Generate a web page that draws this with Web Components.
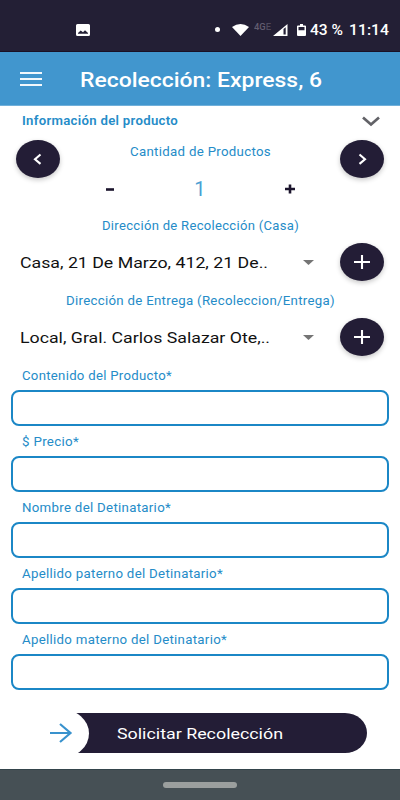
<!DOCTYPE html>
<html lang="es">
<head>
<meta charset="utf-8">
<meta name="viewport" content="width=device-width, initial-scale=1">
<title>Recolección</title>
<style>
  body {
    margin: 0;
    background: #fff;
    font-family: Roboto, "Liberation Sans", sans-serif;
  }
</style>
</head>
<body>
<pickup-screen></pickup-screen>

<script>
// Single line of text, stretched horizontally to the given width
class FitText extends HTMLElement {
  connectedCallback() {
    this.attachShadow({ mode: "open" })
    this.shadowRoot.innerHTML = `
      <style>
        :host { display: block; flex: none; white-space: nowrap; }
        span { display: inline-block; transform-origin: 0 50%; }
      </style>
      <span><slot></slot></span>
    `
    const width = Number(this.getAttribute("width"))
    const span = this.shadowRoot.querySelector("span")
    this.style.width = `${width}px`
    span.style.transform = `scaleX(${width / span.getBoundingClientRect().width})`
  }
}
customElements.define("fit-text", FitText)

class StatusBar extends HTMLElement {
  connectedCallback() {
    this.attachShadow({ mode: "open" })
    this.shadowRoot.innerHTML = `
      <style>
        :host {
          display: flex;
          box-sizing: border-box;
          height: 52px;
          padding: 8px 11px 0 76px;
          align-items: center;
          background: #231f35;
          border-bottom: 1px solid #191126;
          color: #fff;
          font-size: 14px;
          font-weight: 500;
          line-height: 20px;
        }
        svg { display: block; flex: none; fill: #fff; }
        .dot { width: 5px; height: 5px; border-radius: 50%; background: #fff; margin: 0 12px 0 auto; }
        .net { font-size: 9px; line-height: 10px; color: #625d70; margin: -5px 2px 0 5px; }
        .time { margin-left: 6px; }
      </style>
      <svg width="14" height="12" viewBox="0 0 14 12"><path fill-rule="evenodd" d="M1.500 0h11Q14 0 14 1.500v9q0 1.500-1.500 1.500h-11Q0 12 0 10.500v-9Q0 0 1.500 0zM2 9.800h10V9L9 6.300 7 8.200 4.700 6.500 2 9z"/></svg>
      <div class="dot"></div>
      <svg width="17" height="12" viewBox="0 0 17 12"><path d="M0 3Q8.500-3 17 3L8.500 12z"/></svg>
      <div class="net"><fit-text width="17">4G<span style="opacity:.7">E</span></fit-text></div>
      <svg width="15" height="12" viewBox="0 0 15 12"><path fill-rule="evenodd" d="M0 12L14.500 0v12zM10.500 5v5.500h2.200V3.200z"/></svg>
      <svg width="9" height="12" viewBox="0 0 9 13" style="margin:0 4px 0 9px" preserveAspectRatio="none"><path fill-rule="evenodd" d="M3 0h3v1.500h2q1 0 1 1V12q0 1-1 1H1q-1 0-1-1V2.500q0-1 1-1h2zM1.500 3.300v3.500h6V3.300z"/></svg>
      <fit-text width="33">43 %</fit-text>
      <fit-text class="time" width="40">11:14</fit-text>
    `
  }
}
customElements.define("status-bar", StatusBar)

class AppHeader extends HTMLElement {
  connectedCallback() {
    this.attachShadow({ mode: "open" })
    this.shadowRoot.innerHTML = `
      <style>
        :host {
          display: flex;
          box-sizing: border-box;
          height: 54px;
          padding: 0 20px;
          align-items: center;
          gap: 38px;
          background: #4196ce;
          border-bottom: 1px solid #71b0da;
          color: #fff;
          font-size: 20px;
          font-weight: 500;
          line-height: 24px;
        }
        .menu { display: grid; gap: 4px; width: 22px; }
        .menu i { height: 2px; background: #f2f8fc; }
        fit-text { margin-top: 3px; }
      </style>
      <div class="menu"><i></i><i></i><i></i></div>
      <fit-text width="242"><slot></slot></fit-text>
    `
  }
}
customElements.define("app-header", AppHeader)

const ICONS = {
  left: `<path d="M24.500 14.500L19 19.200l5.500 4.700"/>`,
  right: `<path d="M19.500 14.500l5.500 4.700-5.500 4.700"/>`,
  plus: `<path d="M22 12v14M14 19h16"/>`
}

class RoundButton extends HTMLElement {
  connectedCallback() {
    this.attachShadow({ mode: "open" })
    this.shadowRoot.innerHTML = `
      <style>
        :host {
          display: block;
          flex: none;
          width: 44px;
          height: 38px;
          border-radius: 50%;
          background: #231d36;
          box-shadow: 0 2px 5px rgba(0, 0, 0, .22);
        }
        svg { display: block; fill: none; stroke: #fff; stroke-width: 2.100; }
      </style>
      <svg width="44" height="38">${ICONS[this.getAttribute("icon")]}</svg>
    `
  }
}
customElements.define("round-button", RoundButton)

class AddressRow extends HTMLElement {
  connectedCallback() {
    this.attachShadow({ mode: "open" })
    this.shadowRoot.innerHTML = `
      <style>
        :host {
          display: flex;
          height: 38px;
          padding: 0 16px 0 20px;
          align-items: center;
          color: #111;
          font-size: 15.500px;
          line-height: 20px;
        }
        fit-text { margin-top: 2px; }
        svg { margin: 1px 26px 0 auto; fill: #757575; }
      </style>
      <fit-text width="${this.getAttribute("width")}"><slot></slot></fit-text>
      <svg width="11" height="5"><path d="M0 0h11L5.500 5z"/></svg>
      <round-button icon="plus"></round-button>
    `
  }
}
customElements.define("address-row", AddressRow)

class FormField extends HTMLElement {
  connectedCallback() {
    this.attachShadow({ mode: "open" })
    this.shadowRoot.innerHTML = `
      <style>
        :host { display: block; height: 66px; padding: 0 11px; }
        fit-text { height: 23px; padding-left: 11px; }
        .box {
          box-sizing: border-box;
          height: 36px;
          border: 2px solid #1b87c6;
          border-radius: 8px;
        }
      </style>
      <fit-text width="${this.getAttribute("width")}"><slot></slot></fit-text>
      <div class="box"></div>
    `
  }
}
customElements.define("form-field", FormField)

class SlideButton extends HTMLElement {
  connectedCallback() {
    this.attachShadow({ mode: "open" })
    this.shadowRoot.innerHTML = `
      <style>
        :host {
          display: flex;
          width: 333px;
          height: 40px;
          margin-left: 34px;
          align-items: center;
          overflow: hidden;
          border-radius: 0 22px 22px 0 / 0 20px 20px 0;
          background: linear-gradient(90deg, #fff 28px, #231d36 28px);
          color: #fff;
          font-size: 15.500px;
          line-height: 20px;
        }
        .knob {
          display: grid;
          flex: none;
          place-items: center;
          width: 56px;
          height: 49px;
          margin: 0 28px 0 -1px;
          border-radius: 50%;
          background: #fff;
        }
        fit-text { margin-top: 1px; }
        svg { fill: none; stroke: #3992cd; stroke-width: 2.200; }
      </style>
      <div class="knob"><svg width="24" height="20"><path d="M1 10h20M11 1l10.500 9-10.500 9"/></svg></div>
      <fit-text width="166"><slot></slot></fit-text>
    `
  }
}
customElements.define("slide-button", SlideButton)

class PickupScreen extends HTMLElement {
  connectedCallback() {
    this.attachShadow({ mode: "open" })
    this.shadowRoot.innerHTML = `
      <style>
        :host {
          display: flex;
          flex-direction: column;
          width: 400px;
          height: 800px;
          overflow: hidden;
          background: #fff;
          color: #258cc8;
          font-size: 13.500px;
          line-height: 16px;
          letter-spacing: .3px;
        }
        status-bar, app-header, address-row, slide-button { letter-spacing: 0; flex: none; }
        .section { display: flex; justify-content: space-between; height: 34px; padding: 6px 20px 0 22px; box-sizing: border-box; font-weight: 600; }
        .section svg { margin-top: 4px; fill: none; stroke: #626267; stroke-width: 2.700; }
        .quantity { display: flex; justify-content: space-between; height: 77px; padding: 0 16px; box-sizing: border-box; }
        .amount { display: flex; flex-direction: column; align-items: center; padding-top: 3px; }
        .stepper { display: flex; align-items: center; justify-content: space-between; width: 190px; margin: 18px 0 0; font-size: 20px; line-height: 24px; }
        .stepper span { color: #4b9fd3; }
        .stepper svg { fill: none; stroke: #1b142c; stroke-width: 2.600; }
        .caption { display: flex; justify-content: center; height: 26px; }
        .caption + address-row + .caption { padding-top: 11px; }
        .fields { height: 357px; padding-top: 11px; box-sizing: border-box; }
        .nav { display: grid; place-items: center; flex: none; height: 31px; margin-top: auto; background: #465055; box-sizing: border-box; border-top: 1px solid #34444b; }
        .nav i { width: 74px; height: 6px; border-radius: 3px; background: #9b9f9e; }
      </style>
      <status-bar></status-bar>
      <app-header>Recolección: Express, 6</app-header>
      <div class="section">
        <fit-text width="156">Información del producto</fit-text>
        <svg width="18" height="11"><path d="M1 1.500l8 7 8-7"/></svg>
      </div>
      <div class="quantity">
        <round-button icon="left"></round-button>
        <div class="amount">
          <fit-text width="141">Cantidad de Productos</fit-text>
          <div class="stepper">
            <svg width="10" height="10"><path d="M1 5.500h8"/></svg>
            <span>1</span>
            <svg width="10" height="10"><path d="M0 5h10M5 .500v9"/></svg>
          </div>
        </div>
        <round-button icon="right"></round-button>
      </div>
      <div class="caption"><fit-text width="197">Dirección de Recolección (Casa)</fit-text></div>
      <address-row width="248">Casa, 21 De Marzo, 412, 21 De..</address-row>
      <div class="caption"><fit-text width="269">Dirección de Entrega (Recoleccion/Entrega)</fit-text></div>
      <address-row width="250">Local, Gral. Carlos Salazar Ote,..</address-row>
      <div class="fields">
        <form-field width="150">Contenido del Producto*</form-field>
        <form-field width="57">$ Precio*</form-field>
        <form-field width="149">Nombre del Detinatario*</form-field>
        <form-field width="201">Apellido paterno del Detinatario*</form-field>
        <form-field width="205">Apellido materno del Detinatario*</form-field>
      </div>
      <slide-button>Solicitar Recolección</slide-button>
      <div class="nav"><i></i></div>
    `
  }
}
customElements.define("pickup-screen", PickupScreen)
</script>
</body>
</html>
